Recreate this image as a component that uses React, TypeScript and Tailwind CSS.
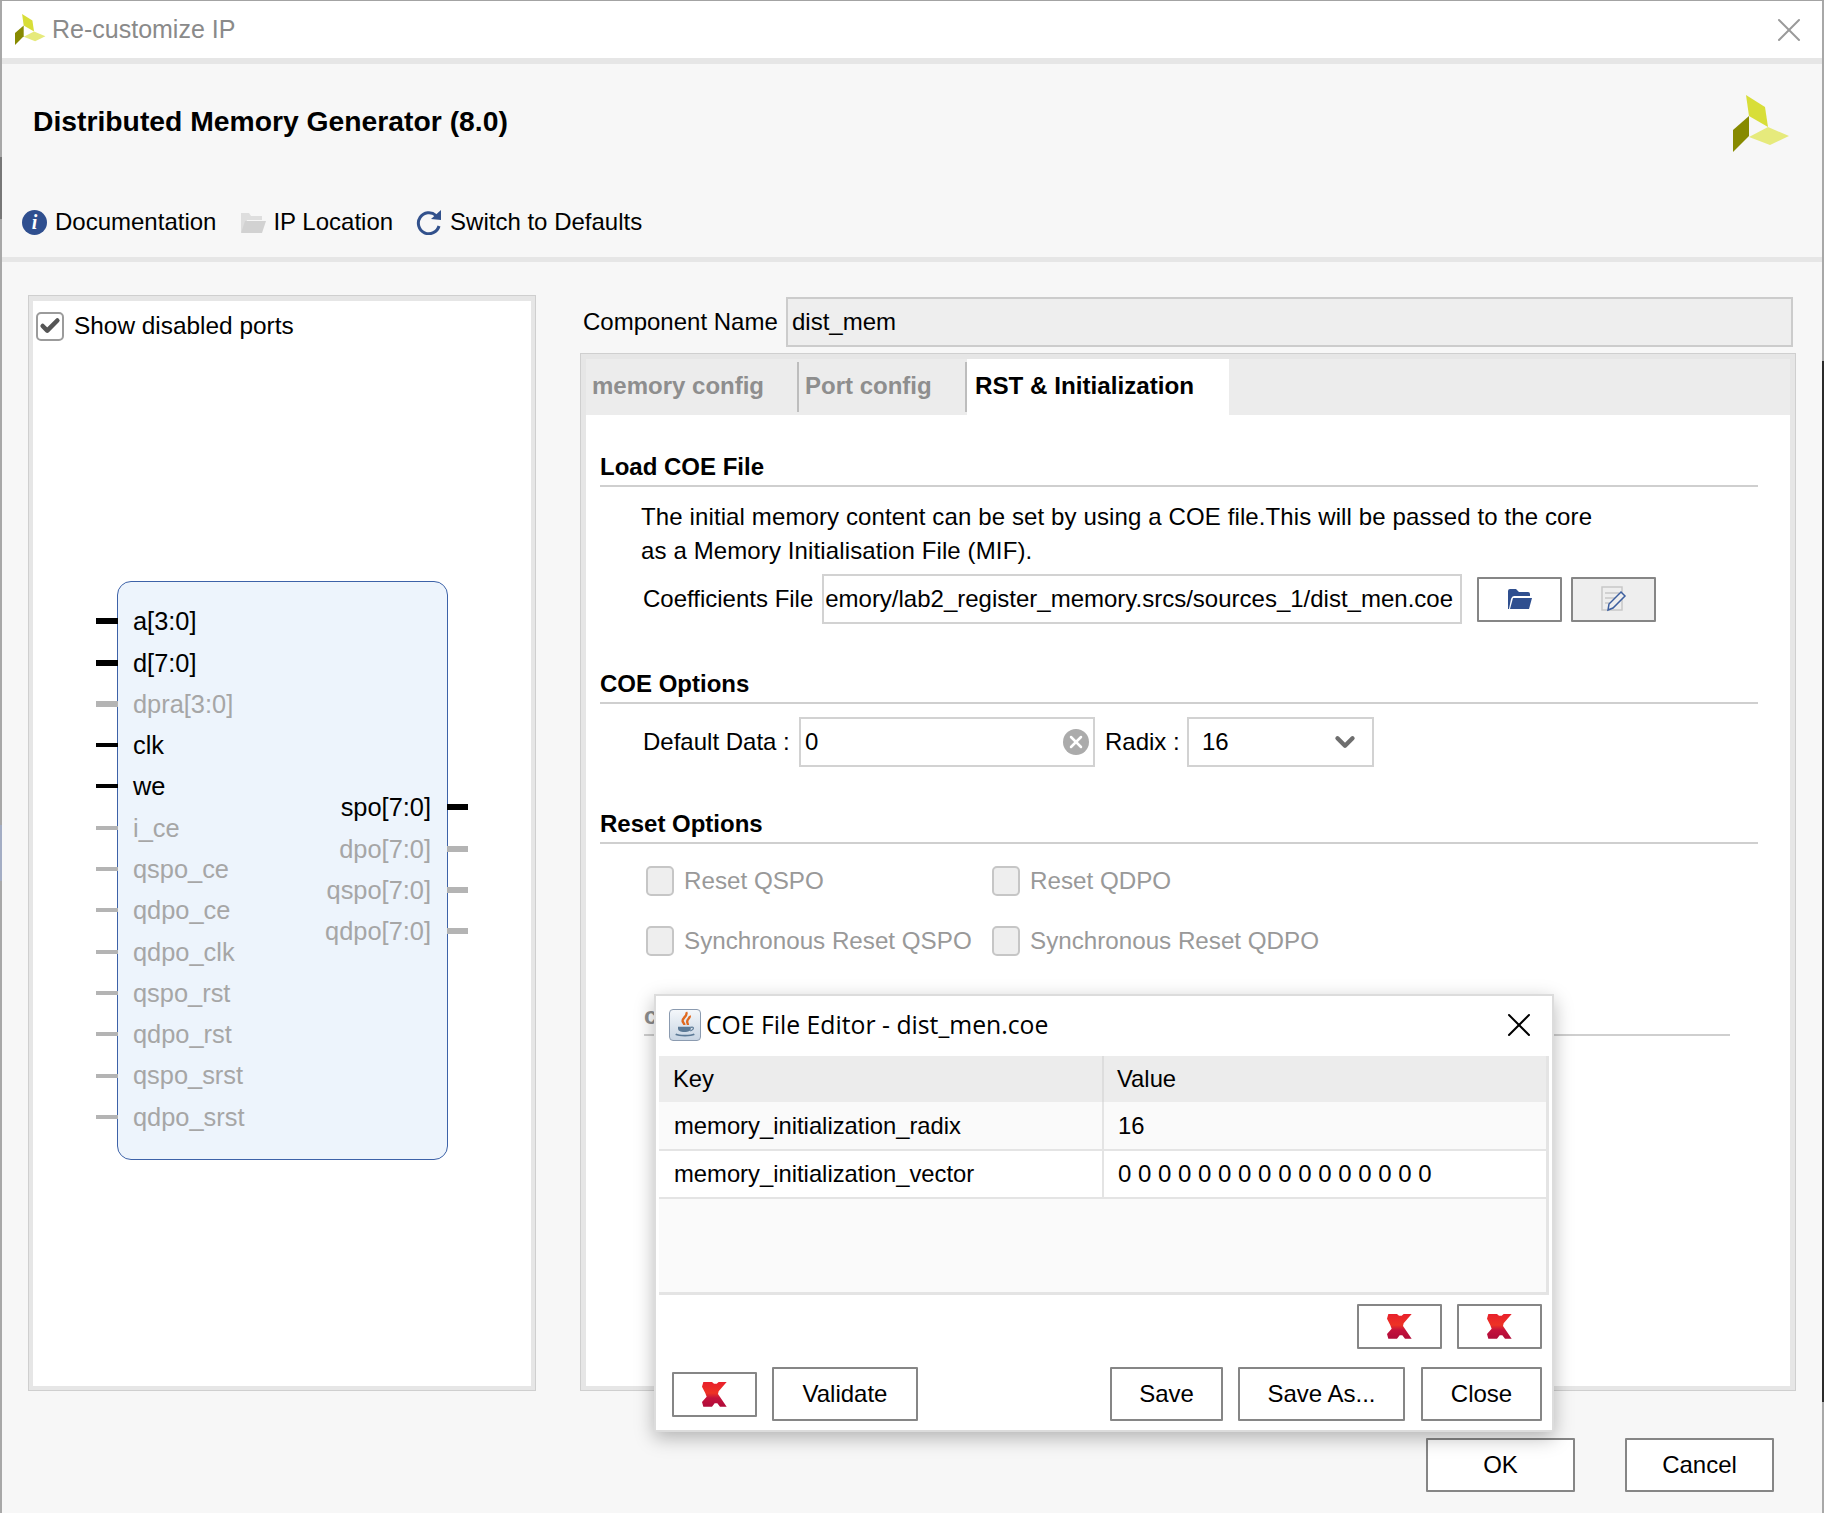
import { X, Check, ChevronDown } from "lucide-react";

const inputs = [
  { name: "a[3:0]", on: true, bus: true },
  { name: "d[7:0]", on: true, bus: true },
  { name: "dpra[3:0]", on: false, bus: true },
  { name: "clk", on: true, bus: false },
  { name: "we", on: true, bus: false },
  { name: "i_ce", on: false, bus: false },
  { name: "qspo_ce", on: false, bus: false },
  { name: "qdpo_ce", on: false, bus: false },
  { name: "qdpo_clk", on: false, bus: false },
  { name: "qspo_rst", on: false, bus: false },
  { name: "qdpo_rst", on: false, bus: false },
  { name: "qspo_srst", on: false, bus: false },
  { name: "qdpo_srst", on: false, bus: false },
];

const outputs = [
  { name: "spo[7:0]", on: true },
  { name: "dpo[7:0]", on: false },
  { name: "qspo[7:0]", on: false },
  { name: "qdpo[7:0]", on: false },
];

function Logo({ className }: { className: string }) {
  return (
    <svg viewBox="0 0 57 57" className={className}>
      <polygon points="13,0 32,12 35,32 16,21" fill="#d8de38" />
      <polygon points="16,21 16,41 0,57 0,35" fill="#878a00" />
      <polygon points="35,32 56,41 37,50 16,42" fill="#e6ea7c" />
    </svg>
  );
}

function RedMark() {
  return (
    <svg viewBox="0 0 75 75" className="h-[25px] w-[25px]">
      <defs>
        <linearGradient id="redmark" x1="0" y1="0" x2="0" y2="1">
          <stop offset="0" stopColor="#e8202c" />
          <stop offset="0.45" stopColor="#ee3324" />
          <stop offset="0.65" stopColor="#c4123c" />
          <stop offset="1" stopColor="#b00c3a" />
        </linearGradient>
      </defs>
      <polygon
        points="4,0 30,0 36,5 44,5 50,0 74,0 50,28 48,36 74,74 54,74 46,64 38,64 30,74 4,74 0,60 14,44 10,34 0,14"
        fill="url(#redmark)"
      />
    </svg>
  );
}

function JavaIcon() {
  return (
    <div className="flex h-[32px] w-[32px] items-center justify-center rounded-[4px] border border-[#8b9bb0] bg-gradient-to-b from-[#f4f7fa] to-[#c9d6e4]">
      <svg viewBox="0 0 24 24" className="h-[28px] w-[28px]" fill="none">
        <path d="M13 1c2 3-4 5-3 8 .4 1 1.500 1.600 1.500 3M16 4c1 2-3 3-2 6 .2 .6 .5 1 .5 2" stroke="#e0691f" strokeWidth="2" />
        <path d="M6 13.500h11v1.500c0 2-2 3-5.500 3S6 17 6 15z" fill="#5c7a96" />
        <path d="M17 14c3-1 3 2-.5 3" stroke="#5c7a96" strokeWidth="1" />
        <path d="M4 20c3 1.500 13 1.500 16 0" stroke="#5c7a96" strokeWidth="1.500" />
      </svg>
    </div>
  );
}

function DialogButton({ label, className }: { label: string; className: string }) {
  return (
    <div className={`flex h-[54px] items-center justify-center border-2 border-[#868686] bg-white rounded-[1px] text-[24px] text-black ${className}`}>
      {label}
    </div>
  );
}

function IconButton() {
  return (
    <div className="flex h-[45px] w-[85px] items-center justify-center rounded-[1px] border-2 border-[#868686] bg-white">
      <RedMark />
    </div>
  );
}

function SectionTitle({ label, className }: { label: string; className: string }) {
  return (
    <div className={`ml-[14px] mr-[32px] flex h-[35px] items-end border-b-2 border-[#cfcfcf] pb-[4px] text-[24px] leading-[28px] font-bold text-black ${className}`}>
      {label}
    </div>
  );
}

function Disabled({ label, className }: { label: string; className: string }) {
  return (
    <div className={`flex items-center ${className}`}>
      <div className="h-[30px] w-[28px] rounded-[5px] border-2 border-[#c6c6c6] bg-[#eeeeee]" />
      <span className="ml-[10px] text-[24.2px] text-[#999999]">{label}</span>
    </div>
  );
}

function Symbol() {
  return (
    <div className="ml-[84px] mt-[236px] flex h-[579px] w-[331px] justify-between rounded-[14px] border border-[#3d62a8] bg-[#edf4fc] pt-[19px]">
      <div className="flex flex-col">
        {inputs.map((p) => (
          <div key={p.name} className="relative flex h-[41.3px] items-center pl-[15px]">
            <div className={`absolute left-[-22px] w-[22px] ${p.on ? "bg-black" : "bg-[#b4b4b4]"} ${p.bus ? "h-[6px]" : "h-[4px]"}`} />
            <span className={`text-[25.4px] ${p.on ? "text-black" : "text-[#a6a6a6]"}`}>{p.name}</span>
          </div>
        ))}
      </div>
      <div className="flex flex-col items-end pt-[186px]">
        {outputs.map((p) => (
          <div key={p.name} className="relative flex h-[41.3px] items-center pr-[16px]">
            <span className={`text-[25.4px] ${p.on ? "text-black" : "text-[#a6a6a6]"}`}>{p.name}</span>
            <div className={`absolute right-[-21px] h-[6px] w-[21px] ${p.on ? "bg-black" : "bg-[#b4b4b4]"}`} />
          </div>
        ))}
      </div>
    </div>
  );
}

function CoeEditor() {
  return (
    <div className="absolute left-[652px] top-[993px] h-[438px] w-[900px] border-2 border-[#dcdcdc] bg-white shadow-[0_6px_18px_rgba(0,0,0,0.28)]">
      <div className="flex h-[60px] items-center pb-[3px] pl-[13px] pr-[13px]">
        <JavaIcon />
        <span className="ml-[5px] flex-1 font-['Open_Sans',sans-serif] text-[24.75px] text-black">COE File Editor - dist_men.coe</span>
        <X size={40} strokeWidth={1.2} className="text-black" />
      </div>
      <div className="mx-[3px] flex h-[239px] flex-col border-b-[3px] border-r-[3px] border-[#e4e4e4] bg-[#fafafa] text-[23.8px] text-black">
        <div className="flex h-[46px] bg-[#ececec]">
          <div className="flex w-[445px] items-center border-r-2 border-[#dddddd] pl-[14px]">Key</div>
          <div className="flex items-center pl-[13px]">Value</div>
        </div>
        <div className="flex h-[49px] border-b-2 border-[#e4e4e4]">
          <div className="flex w-[445px] items-center border-r-2 border-[#e4e4e4] pl-[15px]">memory_initialization_radix</div>
          <div className="flex items-center pl-[14px]">16</div>
        </div>
        <div className="flex h-[48px] border-b-2 border-[#e4e4e4] bg-white">
          <div className="flex w-[445px] items-center border-r-2 border-[#e4e4e4] pl-[15px]">memory_initialization_vector</div>
          <div className="flex items-center pl-[14px] text-[24px]">0 0 0 0 0 0 0 0 0 0 0 0 0 0 0 0</div>
        </div>
      </div>
      <div className="mt-[9px] flex justify-end gap-[15px] pr-[10px]">
        <IconButton />
        <IconButton />
      </div>
      <div className="mt-[18px] flex items-center pl-[16px] pr-[10px]">
        <IconButton />
        <DialogButton label="Validate" className="ml-[15px] w-[146px]" />
        <div className="flex-1" />
        <DialogButton label="Save" className="w-[113px]" />
        <DialogButton label="Save As..." className="ml-[15px] w-[167px]" />
        <DialogButton label="Close" className="ml-[16px] w-[121px]" />
      </div>
    </div>
  );
}

export default function App() {
  return (
    <div className="flex h-[1513px] w-[1824px] overflow-hidden border-t border-[#a3a3a3] bg-[#f7f7f7] font-['Liberation_Sans',sans-serif] text-[24px] text-black">
      <div className="flex w-[2px] flex-col bg-[#a8a8a8]">
        <div className="h-[156px]" />
        <div className="h-[62px] bg-[#777777]" />
        <div className="h-[606px]" />
        <div className="h-[56px] bg-[#a3adc4]" />
      </div>

      <div className="relative h-full w-[1820px]">
        {/* Title bar */}
        <div className="flex h-[57px] items-center bg-white pl-[13px] pr-[13px]">
          <Logo className="h-[31px] w-[31px]" />
          <span className="ml-[6px] flex-1 text-[25px] text-[#8a8a8a]">Re-customize IP</span>
          <X size={40} strokeWidth={1.2} className="text-[#9a9a9a]" />
        </div>
        <div className="h-[6px] bg-[#e6e6e6]" />

        {/* Header */}
        <div className="relative h-[193px]">
          <div className="pl-[31px] pt-[40px] text-[28.3px] leading-[34px] font-bold">Distributed Memory Generator (8.0)</div>
          <Logo className="absolute right-[32px] top-[31px] h-[57px] w-[57px]" />
          <div className="mt-[66px] flex items-center pl-[20px]">
            <div className="flex h-[25px] w-[25px] items-center justify-center rounded-full bg-[#2f4f8f] font-['Liberation_Serif',serif] text-[20px] font-bold italic text-white">i</div>
            <span className="ml-[8px]">Documentation</span>
            <svg viewBox="0 0 26 24" className="ml-[24px] h-[24px] w-[26px]">
              <path d="M1 22V3h8l2 3h11v4H7l-3 12z" fill="#dedede" />
              <path d="M5 11h21l-4 12H1z" fill="#d2d2d2" />
            </svg>
            <span className="ml-[7px]">IP Location</span>
            <svg viewBox="0 0 26 26" className="ml-[23px] h-[26px] w-[26px]" fill="none">
              <path d="M20 6.500A10.500 10.500 0 1 0 23 17" stroke="#32518c" strokeWidth="3" />
              <polygon points="25,1 25,11 15,10" fill="#32518c" />
            </svg>
            <span className="ml-[8px]">Switch to Defaults</span>
          </div>
        </div>
        <div className="h-[5px] bg-[#e6e6e6]" />

        {/* Body */}
        <div className="flex pl-[26px] pr-[26px] pt-[33px]">
          <div className="h-[1096px] w-[508px] border border-[#cfcfcf] bg-white">
            <div className="h-full border-x-[4px] border-b-[4px] border-t-[5px] border-[#e6e6e6]">
              <div className="flex items-center pl-[3px] pt-[7px]">
                <div className="flex h-[29px] w-[28px] items-center justify-center rounded-[5px] border-2 border-[#9b9b9b]">
                  <Check size={22} strokeWidth={5} className="text-[#555555]" />
                </div>
                <span className="ml-[10px] text-[24.4px]">Show disabled ports</span>
              </div>
              <Symbol />
            </div>
          </div>
          <div className="ml-[44px] flex flex-1 flex-col">
            <div className="flex h-[58px] items-start">
              <span className="ml-[3px] mt-[9px] w-[203px]">Component Name</span>
              <div className="mr-[3px] mt-[2px] flex h-[50px] flex-1 items-center border-2 border-[#cccccc] bg-[#eeeeee] pl-[4px]">dist_mem</div>
            </div>
            <div className="h-[1038px] border border-[#cfcfcf] bg-white">
              <div className="h-full border-x-[5px] border-b-[4px] border-t-[5px] border-[#e6e6e6]">
                {/* Tabs */}
                <div className="flex h-[56px] items-center bg-[#ececec] font-bold text-[#8e8e8e]">
                  <div className="flex h-[50px] w-[213px] items-center border-r-2 border-[#bdbdbd] pb-[2px] pl-[6px]">memory config</div>
                  <div className="flex h-[50px] w-[168px] items-center border-r-2 border-[#bdbdbd] pb-[2px] pl-[6px]">Port config</div>
                  <div className="flex h-[56px] w-[262px] items-center bg-white pb-[2px] pl-[8px] text-[24.2px] text-black">RST &amp; Initialization</div>
                </div>
                {/* Load COE File */}
                <SectionTitle label="Load COE File" className="mt-[37px]" />
                <p className="ml-[55px] mt-[13px] leading-[34px] tracking-[0.12px]">The initial memory content can be set by using a COE file.This will be passed to the core<br />as a Memory Initialisation File (MIF).</p>
                <div className="mt-[6px] flex items-center">
                  <span className="ml-[57px] w-[179px]">Coefficients File</span>
                  <div className="flex h-[50px] w-[640px] items-center justify-end overflow-hidden border-2 border-[#d2d2d2] pr-[7px]">
                    <span className="whitespace-nowrap">emory/lab2_register_memory.srcs/sources_1/dist_men.coe</span>
                  </div>
                  <div className="ml-[15px] flex h-[45px] w-[85px] items-center justify-center rounded-[1px] border-2 border-[#868686] bg-white">
                    <svg viewBox="0 0 26 22" className="h-[22px] w-[26px]">
                      <path d="M1 21V3q0-2 2-2h6l3 3h9q2 0 2 2v2H7q-2 0-3 3l-2 10z" fill="#2f4f8f" />
                      <path d="M6 10h19l-3 11H3z" fill="#2f4f8f" />
                    </svg>
                  </div>
                  <div className="ml-[9px] flex h-[45px] w-[85px] items-center justify-center rounded-[1px] border-2 border-[#868686] bg-[#eeeeee]">
                    <svg viewBox="0 0 26 26" className="h-[26px] w-[26px]" fill="none">
                      <rect x="1" y="1" width="20" height="23" stroke="#c8c8c8" strokeWidth="1.500" />
                      <path d="M4 7h14M4 12h10M4 17h6" stroke="#c8c8c8" strokeWidth="1.500" />
                      <path d="M7 24l1-6L20 6l4 4-12 12z" stroke="#3d5f9f" strokeWidth="1.500" fill="#eeeeee" />
                    </svg>
                  </div>
                </div>
                {/* COE Options */}
                <SectionTitle label="COE Options" className="mt-[45px]" />
                <div className="mt-[13px] flex items-center">
                  <span className="ml-[57px] w-[156px]">Default Data :</span>
                  <div className="flex h-[50px] w-[296px] items-center justify-between border-2 border-[#d2d2d2] pl-[4px] pr-[4px]">
                    <span>0</span>
                    <div className="flex h-[26px] w-[26px] items-center justify-center rounded-full bg-[#ababab]">
                      <X size={20} strokeWidth={3} className="text-white" />
                    </div>
                  </div>
                  <span className="ml-[10px] w-[82px]">Radix :</span>
                  <div className="flex h-[50px] w-[187px] items-center justify-between border-2 border-[#d2d2d2] pl-[13px] pr-[12px]">
                    <span>16</span>
                    <ChevronDown size={30} strokeWidth={3.5} className="text-[#6e6e6e]" />
                  </div>
                </div>
                {/* Reset Options */}
                <SectionTitle label="Reset Options" className="mt-[42px]" />
                <div className="mt-[19px] flex">
                  <Disabled label="Reset QSPO" className="ml-[60px] w-[346px]" />
                  <Disabled label="Reset QDPO" className="" />
                </div>
                <div className="mt-[24px] flex">
                  <Disabled label="Synchronous Reset QSPO" className="ml-[60px] w-[346px]" />
                  <Disabled label="Synchronous Reset QDPO" className="" />
                </div>
                <div className="ml-[58px] mr-[60px] mt-[42px] h-[34px] border-b-2 border-[#cfcfcf] font-bold leading-[28px] text-[#8e8e8e]">c</div>
              </div>
            </div>
          </div>
        </div>

        {/* Footer */}
        <div className="mt-[47px] flex justify-end gap-[50px] pr-[48px]">
          <DialogButton label="OK" className="w-[149px]" />
          <DialogButton label="Cancel" className="w-[149px]" />
        </div>

        <CoeEditor />
      </div>

      <div className="flex w-[2px] flex-col bg-[#a8a8a8]">
        <div className="h-[360px]" />
        <div className="h-[1041px] bg-[#2b2b2b]" />
      </div>
    </div>
  );
}
